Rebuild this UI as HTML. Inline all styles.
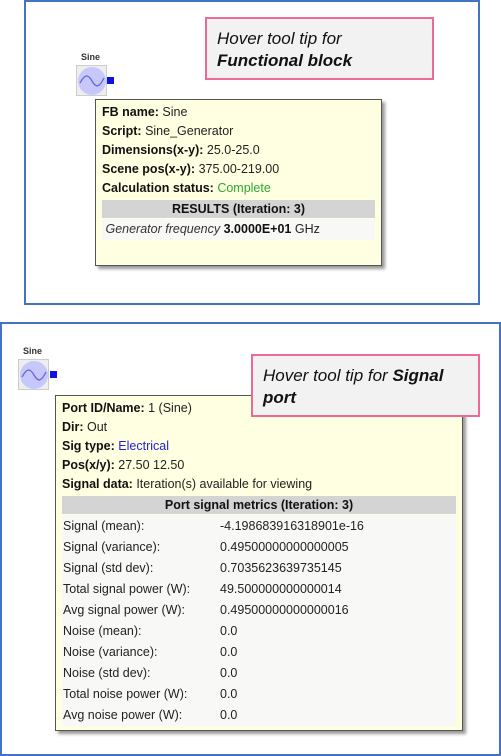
<!DOCTYPE html>
<html><head><style>
body{margin:0;width:501px;height:756px;background:#fff;position:relative;overflow:hidden;font-family:"Liberation Sans",sans-serif;}
.a{position:absolute}
.frame{position:absolute;border:2px solid #4472c4;box-sizing:border-box}
.call{position:absolute;border:2px solid #ee6a94;background:#f2f2f2;box-sizing:border-box;font-style:italic;font-size:17px;line-height:22px;color:#111;padding:9px 10px}
.tip{position:absolute;background:#ffffe1;border:1px solid #555;box-shadow:3px 3px 3px #999;box-sizing:border-box;font-size:12.5px;color:#222}
.tip .l{position:absolute;left:6px;white-space:nowrap}
b{color:#111}
.hdr{position:absolute;background:#d4d4d4;text-align:center;font-weight:bold;color:#111;font-size:12.5px}
.lbl{font-size:9px;font-weight:bold;color:#333}
.ico{position:absolute;width:31px;height:31px;border:1px solid #ccc;background:#eee;box-sizing:border-box}
.tb td{padding:0;height:21px;white-space:nowrap}
</style></head><body>
<div class="frame" style="left:24px;top:0;width:456px;height:305px"></div>
<div class="frame" style="left:0;top:322px;width:501px;height:434px"></div>

<div class="a lbl" style="left:81px;top:52px">Sine</div>
<div class="ico" style="left:76px;top:65px"><svg width="31" height="31"><circle cx="15" cy="15" r="14" fill="#c6c8fb"/><path d="M3 17 C8 8,11 8,15 15 S22 22,27 12" stroke="#6565d8" fill="none" stroke-width="1.3"/></svg></div>
<div class="a" style="left:107px;top:77px;width:7px;height:7px;background:#1010e0"></div>

<div class="call" style="left:205px;top:17px;width:229px;height:63px">Hover tool tip for<br><b>Functional block</b></div>

<div class="tip" style="left:95px;top:99px;width:287px;height:167px">
<div class="l" style="top:5px"><b>FB name:</b> Sine</div>
<div class="l" style="top:24px"><b>Script:</b> Sine_Generator</div>
<div class="l" style="top:43px"><b>Dimensions(x-y):</b> 25.0-25.0</div>
<div class="l" style="top:62px"><b>Scene pos(x-y):</b> 375.00-219.00</div>
<div class="l" style="top:81px"><b>Calculation status:</b> <span style="color:#2ea82e">Complete</span></div>
<div class="hdr" style="left:6px;top:100px;width:273px;height:18px;line-height:18px">RESULTS (Iteration: 3)</div>
<div class="a" style="left:6px;top:119px;width:273px;height:21px;background:#f8f8f6;line-height:21px;white-space:nowrap"><i style="color:#333">&nbsp;Generator frequency</i> <b>3.0000E+01</b> GHz</div>
</div>

<div class="a lbl" style="left:23px;top:346px">Sine</div>
<div class="ico" style="left:18px;top:359px"><svg width="31" height="31"><circle cx="15" cy="15" r="14" fill="#c6c8fb"/><path d="M3 17 C8 8,11 8,15 15 S22 22,27 12" stroke="#6565d8" fill="none" stroke-width="1.3"/></svg></div>
<div class="a" style="left:50px;top:371px;width:7px;height:7px;background:#1010e0"></div>

<div class="tip" style="left:55px;top:395px;width:408px;height:336px">
<div class="l" style="top:5px"><b>Port ID/Name:</b> 1 (Sine)</div>
<div class="l" style="top:24px"><b>Dir:</b> Out</div>
<div class="l" style="top:43px"><b>Sig type:</b> <span style="color:#2222dd">Electrical</span></div>
<div class="l" style="top:62px"><b>Pos(x/y):</b> 27.50 12.50</div>
<div class="l" style="top:81px"><b>Signal data:</b> Iteration(s) available for viewing</div>
<div class="hdr" style="left:6px;top:100px;width:394px;height:18px;line-height:18px">Port signal metrics (Iteration: 3)</div>
<div class="a" style="left:6px;top:119px;width:394px;height:211px;background:#f8f8f6">
<table class="tb" cellspacing="0" style="font-size:12.5px;color:#222;margin-left:1px">
<tr><td style="width:157px">Signal (mean):</td><td>-4.198683916318901e-16</td></tr>
<tr><td>Signal (variance):</td><td>0.49500000000000005</td></tr>
<tr><td>Signal (std dev):</td><td>0.7035623639735145</td></tr>
<tr><td>Total signal power (W):</td><td>49.500000000000014</td></tr>
<tr><td>Avg signal power (W):</td><td>0.49500000000000016</td></tr>
<tr><td>Noise (mean):</td><td>0.0</td></tr>
<tr><td>Noise (variance):</td><td>0.0</td></tr>
<tr><td>Noise (std dev):</td><td>0.0</td></tr>
<tr><td>Total noise power (W):</td><td>0.0</td></tr>
<tr><td>Avg noise power (W):</td><td>0.0</td></tr>
</table></div>
</div>

<div class="call" style="left:251px;top:354px;width:229px;height:63px">Hover tool tip for <b>Signal port</b></div>
</body></html>
